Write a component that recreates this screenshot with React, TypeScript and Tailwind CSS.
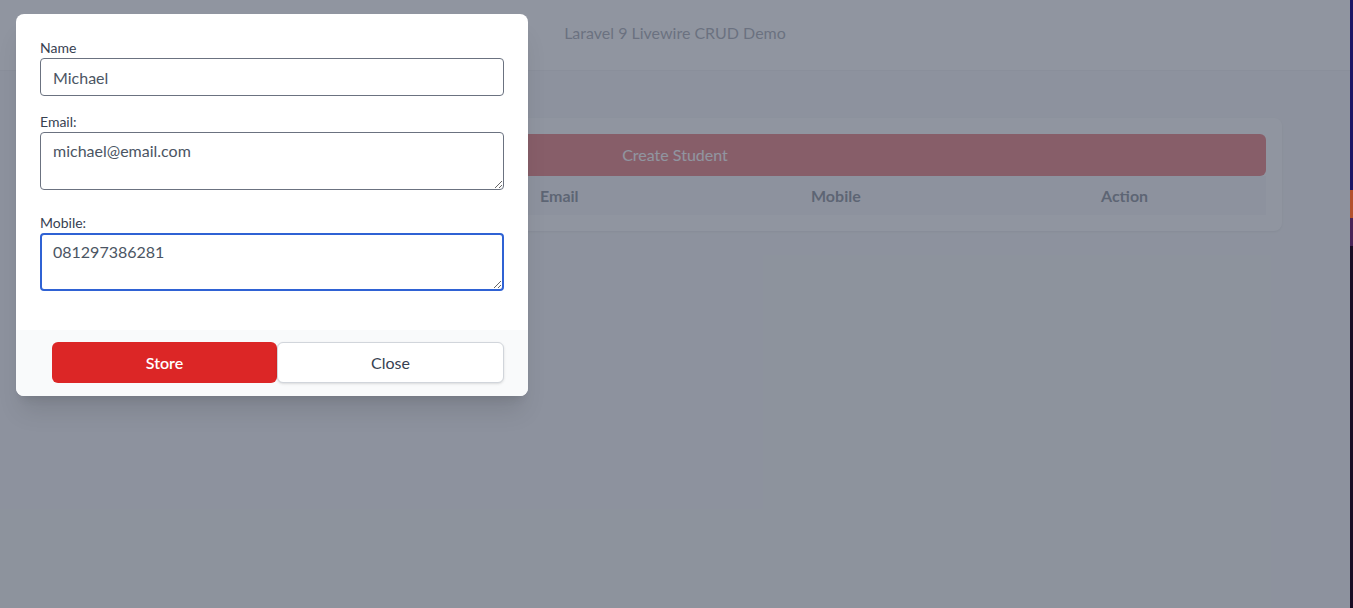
import React from "react";

export default function App() {
  return (
    <div className="flex h-[608px] w-full overflow-hidden font-['Lato','Open_Sans',sans-serif]">
      <div className="relative flex-1 bg-[#f3f4f6]">
        <header className="flex h-[71px] items-center justify-center border-b border-[#e5e7eb] bg-white pb-[4px] text-[16px] text-[#6b7280]">
          Laravel 9 Livewire CRUD Demo
        </header>
        <main className="px-[68px] pt-[47px]">
          <div className="rounded-lg bg-white p-4 shadow">
            <button className="flex h-[42px] w-full items-center justify-center rounded-md bg-[#dc2626] text-[16px] text-white">
              Create Student
            </button>
            <div className="grid h-[39px] grid-cols-[432px_271px_290px_1fr] items-center bg-[#f3f4f6] text-[16px] font-bold text-[#374151]">
              <div className="pl-6">Name</div>
              <div className="pl-6">Email</div>
              <div className="pl-6">Mobile</div>
              <div className="pl-6">Action</div>
            </div>
          </div>
        </main>

        <div className="absolute inset-0 bg-[#6b7280]/75" />

        <div className="absolute left-4 top-[14px] w-[512px] overflow-hidden rounded-lg bg-white shadow-xl">
          <div className="px-6 pt-6 pb-[39px]">
            <label className="block text-[14px] leading-5 text-[#374151]">Name</label>
            <input
              defaultValue="Michael"
              className="block h-[38px] w-full rounded border border-[#6b7280] px-3 text-[16px] text-[#4b5563] outline-none"
            />
            <label className="mt-4 block text-[14px] leading-5 text-[#374151]">Email:</label>
            <textarea
              defaultValue="michael@email.com"
              className="block h-[58px] w-full rounded border border-[#6b7280] px-3 pt-[6px] text-[16px] leading-6 text-[#4b5563] outline-none"
            />
            <label className="mt-[23px] block text-[14px] leading-5 text-[#374151]">Mobile:</label>
            <textarea
              defaultValue="081297386281"
              className="block h-[58px] w-full rounded border-2 border-[#2f62d4] px-[11px] pt-[5px] text-[16px] leading-6 text-[#4b5563] outline-none"
            />
          </div>
          <div className="flex bg-[#f9fafb] pl-9 pr-6 pt-3 pb-[13px]">
            <button className="flex h-[41px] flex-1 items-center justify-center rounded-md bg-[#dc2626] text-[16px] font-semibold text-white">
              Store
            </button>
            <button className="flex h-[41px] flex-1 items-center justify-center rounded-md border border-[#d1d5db] bg-white text-[16px] text-[#374151] shadow-sm">
              Close
            </button>
          </div>
        </div>
      </div>
      <div className="flex w-[3px] flex-col">
        <div className="h-[190px] bg-[#1d1565]" />
        <div className="h-[28px] bg-[#b4502c]" />
        <div className="h-[28px] bg-[#4a2458]" />
        <div className="flex-1 bg-[#1a0c24]" />
      </div>
    </div>
  );
}
